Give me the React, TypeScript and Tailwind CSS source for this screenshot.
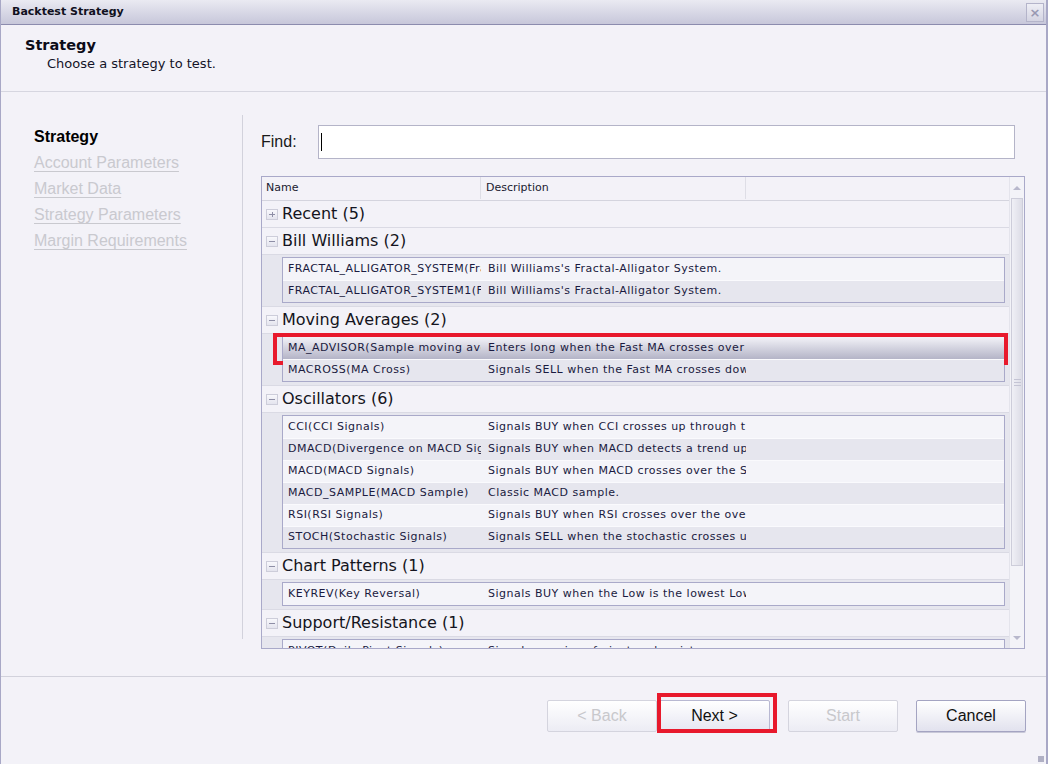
import React from 'react';

type Row = { name: string; desc: string; selected?: boolean };
type Group = { title: string; open: boolean; rows: Row[] };

const groups: Group[] = [
  { title: 'Recent (5)', open: false, rows: [] },
  {
    title: 'Bill Williams (2)',
    open: true,
    rows: [
      { name: 'FRACTAL_ALLIGATOR_SYSTEM(Fractal-Alligator System)', desc: "Bill Williams's Fractal-Alligator System." },
      { name: 'FRACTAL_ALLIGATOR_SYSTEM1(Fractal-Alligator System)', desc: "Bill Williams's Fractal-Alligator System." },
    ],
  },
  {
    title: 'Moving Averages (2)',
    open: true,
    rows: [
      { name: 'MA_ADVISOR(Sample moving average advisor)', desc: 'Enters long when the Fast MA crosses over the Slow MA', selected: true },
      { name: 'MACROSS(MA Cross)', desc: 'Signals SELL when the Fast MA crosses down through the Slow MA' },
    ],
  },
  {
    title: 'Oscillators (6)',
    open: true,
    rows: [
      { name: 'CCI(CCI Signals)', desc: 'Signals BUY when CCI crosses up through the level' },
      { name: 'DMACD(Divergence on MACD Signals)', desc: 'Signals BUY when MACD detects a trend up and' },
      { name: 'MACD(MACD Signals)', desc: 'Signals BUY when MACD crosses over the Signal line' },
      { name: 'MACD_SAMPLE(MACD Sample)', desc: 'Classic MACD sample.' },
      { name: 'RSI(RSI Signals)', desc: 'Signals BUY when RSI crosses over the oversold level' },
      { name: 'STOCH(Stochastic Signals)', desc: 'Signals SELL when the stochastic crosses under' },
    ],
  },
  {
    title: 'Chart Patterns (1)',
    open: true,
    rows: [{ name: 'KEYREV(Key Reversal)', desc: 'Signals BUY when the Low is the lowest Low of' }],
  },
  {
    title: 'Support/Resistance (1)',
    open: true,
    rows: [{ name: 'PIVOT(Daily Pivot Signals)', desc: 'Signals a series of pivot and resistance' }],
  },
];

const navItems = ['Account Parameters', 'Market Data', 'Strategy Parameters', 'Margin Requirements'];

const Expander: React.FC<{ open: boolean }> = ({ open }) => (
  <span className="relative inline-block w-[12px] h-[11px] border border-[#cdcdda] bg-gradient-to-b from-[#f8f8fc] to-[#e4e4ee]">
    <span className="absolute left-[2px] right-[2px] top-[4px] h-px bg-[#8e8ea6]"></span>
    {!open && <span className="absolute top-[2px] bottom-[2px] left-[4.5px] w-px bg-[#8e8ea6]"></span>}
  </span>
);

const App: React.FC = () => {
  return (
    <div className="w-[1048px] h-[764px] bg-[#f3f2f8] border-l border-r-[2px] border-[#a8a8c6] flex flex-col overflow-hidden font-['DejaVu_Sans',sans-serif] text-[#1a1a2e]">
      {/* Title bar */}
      <div className="h-[25px] shrink-0 flex items-center justify-between pl-[11px] pr-[2px] bg-gradient-to-b from-[#eaeaf2] to-[#c7c7da] border-b border-[#8c8cae]">
        <span className="text-[11px] font-bold text-[#101020]">Backtest Strategy</span>
        <span className="w-[18px] h-[19px] flex items-center justify-center border border-[#b4b4ca] bg-gradient-to-b from-[#eeeef5] to-[#d4d4e2] text-[#9898b2] text-[13px] font-bold leading-none">×</span>
      </div>

      {/* Header */}
      <div className="h-[67px] shrink-0 border-b border-[#d6d6e0] pl-[24px] pt-[11px]">
        <div className="text-[14.5px] font-bold leading-[18px] text-[#0c0c18]">Strategy</div>
        <div className="text-[13px] leading-[20px] pl-[22px] text-[#141428]">Choose a strategy to test.</div>
      </div>

      {/* Content */}
      <div className="h-[584px] shrink-0 flex">
        <div className="w-[241px] shrink-0 pt-[32px] pl-[33px] font-['Liberation_Sans',Arial,sans-serif] text-[16px]">
          <div className="leading-[26px] font-bold text-black">Strategy</div>
          {navItems.map((n) => (
            <div key={n} className="leading-[26px] text-[#c9c9cf] underline underline-offset-[3px]">
              {n}
            </div>
          ))}
        </div>
        <div className="w-px shrink-0 mt-[23px] h-[524px] bg-[#d2d2dc]"></div>

        <div className="flex-1 pt-[33px] pl-[18px]">
          <div className="flex items-center h-[34px]">
            <span className="w-[57px] font-['Liberation_Sans',Arial,sans-serif] text-[16px] text-[#1a1a1a]">Find:</span>
            <div className="w-[697px] h-[34px] bg-white border border-[#b4b4c8] flex items-center pl-[2px]">
              <span className="w-px h-[18px] bg-black"></span>
            </div>
          </div>

          {/* Strategy grid */}
          <div className="mt-[17px] w-[764px] h-[473px] border border-[#a9a9c9] flex overflow-hidden">
            <div className="flex-1 overflow-hidden">
              <div className="h-[24px] flex items-center pb-[1px] border-b border-[#d4d4de] text-[11px] text-[#1a1a30]">
                <div className="w-[219px] h-full flex items-center pl-[4px] border-r border-[#dedee6]">Name</div>
                <div className="w-[265px] h-full flex items-center pl-[5px] border-r border-[#dedee6]">Description</div>
              </div>

              {groups.map((g) => (
                <div key={g.title}>
                  <div className="h-[27px] flex items-center gap-[4px] pl-[4px] border-b border-[#dadae4] text-[16px] text-[#141420]">
                    <Expander open={g.open} />
                    <span>{g.title}</span>
                  </div>
                  {g.open && (
                    <div className="bg-[#e6e6ee] pl-[20px] pr-[4px] pt-[2px] pb-[3px] border-b border-[#dadae4]">
                      <div className="border border-[#a9a9c9]">
                        {g.rows.map((r, i) => (
                          <div
                            key={r.name}
                            className={
                              'relative h-[22px] flex items-center text-[11px] tracking-[0.5px] text-[#1a1a40] whitespace-nowrap ' +
                              (i > 0 ? 'border-t border-[#fafafd] ' : '') +
                              (r.selected
                                ? 'bg-gradient-to-b from-[#f3f3f8] to-[#b4b4c7]'
                                : i % 2 === 0
                                  ? 'bg-[#f4f4f9]'
                                  : 'bg-[#e6e6ee]')
                            }
                          >
                            <div className="w-[198px] pl-[5px] overflow-hidden">{r.name}</div>
                            <div className="w-[265px] pl-[7px] overflow-hidden">{r.desc}</div>
                            {r.selected && (
                              <div className="absolute -left-[10px] -right-[4px] -top-[4px] -bottom-[6px] border-4 border-[#e8192c]"></div>
                            )}
                          </div>
                        ))}
                      </div>
                    </div>
                  )}
                </div>
              ))}
            </div>

            {/* Scrollbar */}
            <div className="w-[15px] shrink-0 flex flex-col bg-[#f3f3f8] border-l border-[#e4e4ec]">
              <div className="h-[21px] flex items-center justify-center">
                <span className="w-0 h-0 border-l-[4px] border-r-[4px] border-b-[4px] border-l-transparent border-r-transparent border-b-[#b8b8cc]"></span>
              </div>
              <div className="h-[368px] mx-[1px] border border-[#cdcdda] bg-gradient-to-r from-[#f0f0f6] via-[#e6e6ee] to-[#dcdce6] flex flex-col items-center justify-center gap-[2px]">
                <span className="w-[7px] h-px bg-[#c4c4d4]"></span>
                <span className="w-[7px] h-px bg-[#c4c4d4]"></span>
                <span className="w-[7px] h-px bg-[#c4c4d4]"></span>
              </div>
              <div className="flex-1"></div>
              <div className="h-[21px] flex items-center justify-center">
                <span className="w-0 h-0 border-l-[4px] border-r-[4px] border-t-[4px] border-l-transparent border-r-transparent border-t-[#b8b8cc]"></span>
              </div>
            </div>
          </div>
        </div>
      </div>

      {/* Footer */}
      <div className="flex-1 border-t border-[#d2d2dc] pt-[23px] pl-[546px] flex items-start font-['Liberation_Sans',Arial,sans-serif] text-[16px] relative">
        <button className="w-[110px] h-[32px] rounded-[2px] border border-[#d4d4de] bg-gradient-to-b from-white to-[#ececf4] text-[#c8c8cc]">
          &lt; Back
        </button>
        <div className="relative ml-[2px]">
          <button className="w-[111px] h-[32px] rounded-[2px] border border-[#b8b8d2] bg-gradient-to-b from-white to-[#e6e6f2] text-[#101010]">
            Next &gt;
          </button>
          <div className="absolute -left-[2px] -top-[7px] -right-[7px] -bottom-[1px] border-4 border-[#e8192c]"></div>
        </div>
        <button className="ml-[18px] w-[110px] h-[32px] rounded-[2px] border border-[#d4d4de] bg-gradient-to-b from-white to-[#ececf4] text-[#c8c8cc]">
          Start
        </button>
        <button className="ml-[18px] w-[110px] h-[32px] rounded-[2px] border border-[#a4a4c2] bg-gradient-to-b from-white to-[#e2e2ee] text-[#101010] shadow-[0_1px_0_#c8c8d8]">
          Cancel
        </button>
        <div className="absolute right-[2px] bottom-[2px] w-[6px] h-[6px] bg-[radial-gradient(#b0b0c4_1px,transparent_1px)] bg-[length:2px_2px]"></div>
      </div>
    </div>
  );
};

export default App;
